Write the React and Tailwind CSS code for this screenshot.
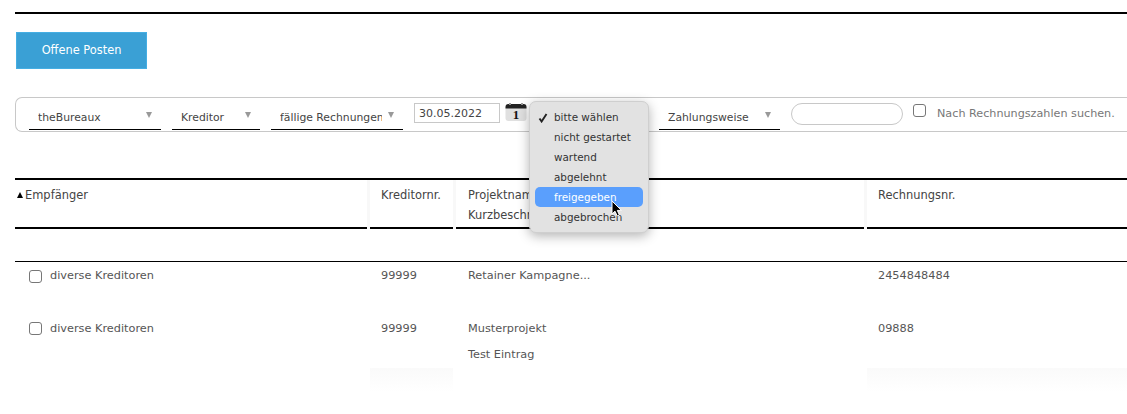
const filterFont = { fontFamily: '"DejaVu Sans", sans-serif' };

const menuItems = ["bitte wählen", "nicht gestartet", "wartend", "abgelehnt", "freigegeben", "abgebrochen"];

function FilterSelect({ label, className }) {
  return (
    <div className={`relative flex h-[32px] items-start border-b border-black pl-[9px] pr-[9px] pt-[13px] text-[10.8px] leading-[14px] text-[#444] ${className}`}>
      <span className="mr-[6px] min-w-0 flex-1 overflow-hidden whitespace-nowrap">{label}</span>
      <span className="mt-[1px] h-0 w-0 shrink-0 border-x-[3.5px] border-t-[6px] border-x-transparent border-t-[#999]" />
    </div>
  );
}

function CalendarIcon() {
  return (
    <svg width="22" height="18" viewBox="0 0 22 18" className="block shrink-0">
      <rect x="0.5" y="1" width="21" height="17" rx="3" fill="#e0e0e0" />
      <path d="M0.5 5.5V4a3 3 0 0 1 3-3h15a3 3 0 0 1 3 3v1.5z" fill="#222" />
      <rect x="4" y="0" width="2" height="2" fill="#999" />
      <rect x="16" y="0" width="2" height="2" fill="#999" />
      <text x="11" y="16" textAnchor="middle" fontSize="13" fontWeight="700" fontFamily='"Liberation Serif", serif' fill="#111">1</text>
    </svg>
  );
}

function Checkbox({ className }) {
  return <span className={`block h-[13px] w-[13px] shrink-0 rounded-[3px] border border-[#777] bg-white ${className}`} />;
}

function Row({ name, nr, project, note, invoice, className, boxClass }) {
  return (
    <div className={`grid grid-cols-[352px_83px_408px_1fr] gap-x-[3px] text-[11.3px] leading-[14px] text-[#555] ${className}`}>
      <div className="flex items-start pl-[14px]">
        <Checkbox className={boxClass} />
        <span className="ml-[8px]">{name}</span>
      </div>
      <div className="pl-[11px]">{nr}</div>
      <div className="pl-[12px]">
        <div>{project}</div>
        {note && <div className="mt-[12px]">{note}</div>}
      </div>
      <div className="pl-[11px]">{invoice}</div>
    </div>
  );
}

export default function App() {
  return (
    <div className="relative h-[414px] w-[1127px] overflow-hidden bg-white pl-[15px] pt-[12px]" style={filterFont}>
      <div className="h-[2px] bg-black" />

      <button className="mt-[18px] ml-px block h-[37px] w-[131px] border border-[#45aee3] bg-[#3aa0d5] pt-[1px] text-[11.4px] text-white">
        Offene Posten
      </button>

      <div className="mt-[28px] flex h-[35px] items-start rounded-l-[7px] border border-r-0 border-[#c8c8c8] pl-[13px] text-[#444]">
        <FilterSelect label="theBureaux" className="w-[132px]" />
        <FilterSelect label="Kreditor" className="ml-[11px] w-[88px]" />
        <FilterSelect label="fällige Rechnungen" className="ml-[11px] w-[132px]" />
        <div className="ml-[11px] mt-[5px] h-[20px] w-[86px] border border-[#c8c8c8] pl-[4px] text-[11px] leading-[20px]">30.05.2022</div>
        <div className="ml-[5px] mt-[5px]"><CalendarIcon /></div>
        <FilterSelect label="bitte wählen" className="ml-[10px] w-[111px]" />
        <FilterSelect label="Zahlungsweise" className="ml-[11px] w-[121px]" />
        <div className="ml-[11px] mt-[5px] h-[22px] w-[112px] rounded-full border border-[#c8c8c8]" />
        <Checkbox className="ml-[10px] mt-[6px]" />
        <span className="ml-[11px] mt-[9px] whitespace-nowrap text-[11.2px] leading-[14px] text-[#777]">Nach Rechnungszahlen suchen.</span>
      </div>

      <div className="mt-[46px] border-t-2 border-black">
        <div className="grid h-[49px] grid-cols-[352px_83px_408px_1fr] gap-x-[3px] bg-[#f8f8f8] text-[11.45px] leading-[20px] text-[#444]">
          <div className="flex border-b-2 border-black bg-white pl-[2px] pt-[5px]">
            <span className="mr-[2px] mt-[7px] h-0 w-0 border-x-[3.5px] border-b-[6px] border-x-transparent border-b-black" />
            Empfänger
          </div>
          <div className="border-b-2 border-black bg-white pl-[11px] pt-[5px]">Kreditornr.</div>
          <div className="border-b-2 border-black bg-white pl-[12px] pt-[5px]">
            <div>Projektname</div>
            <div>Kurzbeschreibung</div>
          </div>
          <div className="border-b-2 border-black bg-white pl-[11px] pt-[5px]">Rechnungsnr.</div>
        </div>

        <div className="mt-[32px] border-t border-black" />

        <Row name="diverse Kreditoren" nr="99999" project="Retainer Kampagne..." invoice="2454848484" className="mt-[7px]" boxClass="mt-[1px]" />
        <Row name="diverse Kreditoren" nr="99999" project="Musterprojekt" note="Test Eintrag" invoice="09888" className="mt-[39px]" />

        <div className="mt-[6px] grid h-[24px] grid-cols-[352px_83px_408px_1fr] gap-x-[3px]">
          <div />
          <div className="bg-gradient-to-b from-[#fafafa] to-white" />
          <div />
          <div className="bg-gradient-to-b from-[#fafafa] to-white" />
        </div>
      </div>

      {/* offenes Status-Menü */}
      <div className="absolute left-[529px] top-[101px] h-[132px] w-[120px] rounded-[7px] border border-[#cfcfcf] bg-[#e2e2e2] px-[5px] pt-[5px] text-[10.4px] text-[#333] shadow-[0_3px_12px_rgba(0,0,0,0.3)]">
        {menuItems.map((item, index) => (
          <div
            key={item}
            className={`relative h-[20px] rounded-[5px] pl-[19px] leading-[21px] ${item === "freigegeben" ? "bg-[#5a9ffd] text-white" : ""}`}
          >
            {index === 0 && (
              <svg width="10" height="10" viewBox="0 0 10 10" className="absolute left-[3px] top-[6px]">
                <path d="M1.5 5.5L3.6 8.5L8.5 1" fill="none" stroke="#222" strokeWidth="1.9" />
              </svg>
            )}
            {item}
          </div>
        ))}
      </div>

      {/* Mauszeiger */}
      <svg width="13" height="18" viewBox="0 0 13 18" className="absolute left-[611px] top-[200px]">
        <path d="M1 1V14L4 11.2L6.2 16L8.4 15L6.3 10.4H10.5z" fill="#000" stroke="#fff" strokeWidth="1" />
      </svg>
    </div>
  );
}
